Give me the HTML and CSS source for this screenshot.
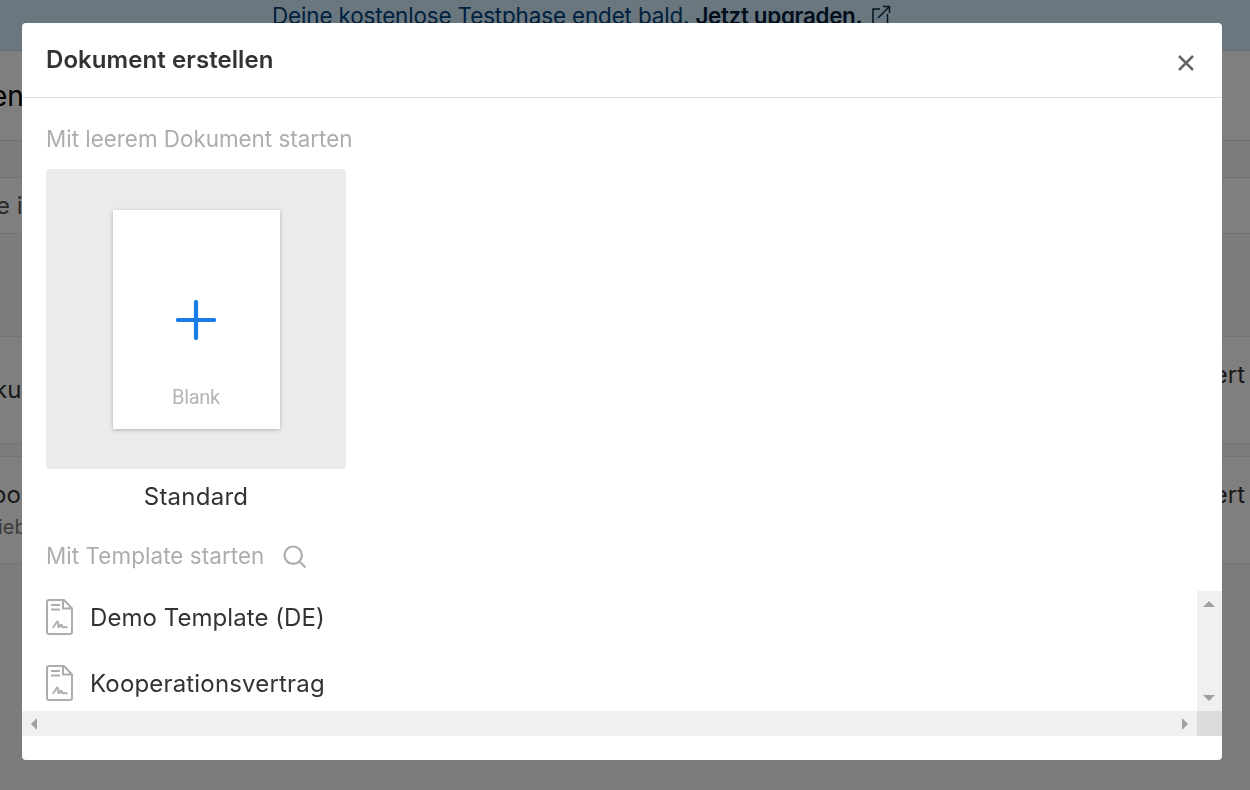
FILE: index.html
```html
<!DOCTYPE html>
<html lang="de">
<head>
    <meta charset="UTF-8">
    <meta name="viewport" content="width=device-width, initial-scale=1.0">
    <title>Dokument erstellen</title>
    <link rel="stylesheet" href="styles.css">
</head>
<body>
    <div class="page">
        <div class="banner">
            <span class="trial">Deine kostenlose Testphase endet bald.</span>
            <b class="upgrade">Jetzt upgraden.</b>
            <svg class="external" width="20" height="20" viewBox="0 0 20 20">
                <path d="M9 4H2V19H16.500V9M7 13L18 2M12 1.500H18.500V8"/>
            </svg>
        </div>
        <div class="topbar"><span>en</span></div>
        <div class="search-row"><span>e i</span></div>
        <div class="doc">
            <div class="doc-name">ku</div>
            <div class="doc-state">ert</div>
        </div>
        <div class="doc">
            <div class="doc-name">oo<small>ieb</small></div>
            <div class="doc-state">ert</div>
        </div>
    </div>
    <div class="overlay">
        <div class="modal">
            <div class="modal-head">
                <h1>Dokument erstellen</h1>
                <svg class="close" width="18" height="18" viewBox="0 0 18 18">
                    <path d="M2 2L16 16M16 2L2 16"/>
                </svg>
            </div>
            <div class="blank">
                <h2>Mit leerem Dokument starten</h2>
                <div class="thumb">
                    <div class="sheet">
                        <svg class="plus" width="40" height="40" viewBox="0 0 40 40">
                            <path d="M20 2V38M2 20H38"/>
                        </svg>
                        <span>Blank</span>
                    </div>
                </div>
                <p>Standard</p>
            </div>
            <h2 class="template-title">
                <span>Mit Template starten</span>
                <svg class="magnifier" width="24" height="24" viewBox="0 0 24 24">
                    <circle cx="10.200" cy="10.200" r="8.700"/>
                    <path d="M16.500 16.500L22.500 22.500"/>
                </svg>
            </h2>
            <div class="scroller">
                <ul class="templates">
                    <li>
                        <svg class="file" width="28" height="36" viewBox="0 0 28 36">
                            <path d="M18 1H3Q1 1 1 3V33Q1 35 3 35H24Q26 35 26 33V9.500L18 1H17V9.500H26M5 6H14M5 10.500H14"/>
                            <path d="M6.500 28.500C9 28 10 22 11.500 22.500C13 23.500 11.500 28.500 13 28C14.500 27 14 25 15.500 26S15 28 17 28.200S18.500 27.500 21.500 28.500"/>
                        </svg>
                        <span>Demo Template (DE)</span>
                    </li>
                    <li>
                        <svg class="file" width="28" height="36" viewBox="0 0 28 36">
                            <path d="M18 1H3Q1 1 1 3V33Q1 35 3 35H24Q26 35 26 33V9.500L18 1H17V9.500H26M5 6H14M5 10.500H14"/>
                            <path d="M6.500 28.500C9 28 10 22 11.500 22.500C13 23.500 11.500 28.500 13 28C14.500 27 14 25 15.500 26S15 28 17 28.200S18.500 27.500 21.500 28.500"/>
                        </svg>
                        <span class="contract">Kooperationsvertrag</span>
                    </li>
                </ul>
                <div class="bar-y"><i class="up"></i><i class="down"></i></div>
                <div class="bar-x"><i class="left"></i><i class="right"></i></div>
                <div class="corner"></div>
            </div>
        </div>
    </div>
</body>
</html>
```
FILE: styles.css
```css
* {
	margin: 0;
	padding: 0;
	box-sizing: border-box;
}
body {
	height: 790px;
	overflow: hidden;
	background: #f9f9fc;
	color: #333;
	font-family: Inter, "Liberation Sans", sans-serif;
	font-size: 24px;
}
svg {
	fill: none;
	flex: none;
}
span, b {
	white-space: nowrap;
}
.page {
	height: 790px;
}
.banner {
	height: 51px;
	padding: 1px 0 0 272px;
	display: flex;
	background: #d6eeff;
	border-bottom: 1px solid #c4dceb;
	color: #00427a;
	font-size: 22.4px;
	line-height: 29px;
	letter-spacing: -0.12px;
}
.upgrade {
	margin-left: 6px;
	color: #001d3d;
	font-weight: 600;
	letter-spacing: -0.32px;
}
.external {
	margin: 4px 0 0 9px;
	stroke: #00294d;
	stroke-width: 1.5;
}
.topbar {
	height: 90px;
	padding-top: 27px;
	background: #fff;
	border-bottom: 1px solid #e4e4e6;
	color: #000;
	font-size: 28px;
	line-height: 36px;
}
.topbar span {
	margin-left: -9px;
}
.search-row {
	height: 57px;
	margin: 36px 0 102px;
	padding-top: 13px;
	background: #fff;
	border-top: 1px solid #e4e4e6;
	border-bottom: 1px solid #e4e4e6;
	color: #555;
	line-height: 30px;
}
.search-row span {
	margin-left: -4px;
}
.doc {
	height: 108px;
	margin-bottom: 12px;
	padding: 23px 5px 0 0;
	display: flex;
	justify-content: space-between;
	background: #fff;
	border-top: 1px solid #e4e4e6;
	border-bottom: 1px solid #e4e4e6;
	line-height: 30px;
}
.doc-name {
	padding-top: 15px;
	margin-left: -6px;
}
.doc + .doc .doc-name {
	padding-top: 0;
	margin-left: -8px;
}
.doc small {
	display: block;
	margin-left: 6px;
	color: #777;
	font-size: 20px;
	line-height: 34px;
}
.overlay {
	position: fixed;
	inset: 0;
	padding: 23px 28px 30px 22px;
	background: rgba(0, 0, 0, 0.5);
}
.modal {
	height: 737px;
	background: #fff;
	border-radius: 4px;
	overflow: hidden;
}
.modal-head {
	height: 75px;
	padding: 0 27px 0 24px;
	display: flex;
	justify-content: space-between;
	align-items: center;
	border-bottom: 1px solid #e0e0e0;
}
h1 {
	font-size: 24px;
	font-weight: 600;
	line-height: 30px;
	letter-spacing: 0.08px;
}
.close {
	margin-top: 5px;
	stroke: #666;
	stroke-width: 2.5;
}
h2 {
	color: #adadad;
	font-size: 22.4px;
	font-weight: 400;
	line-height: 28px;
	white-space: nowrap;
}
.blank {
	width: 324px;
	padding: 27px 0 0 24px;
}
.thumb {
	height: 300px;
	margin-top: 16px;
	padding-top: 1px;
	display: flex;
	justify-content: center;
	align-items: center;
	background: #ebebeb;
	border-radius: 4px;
}
.sheet {
	width: 167px;
	height: 219px;
	padding-top: 90px;
	display: flex;
	flex-direction: column;
	align-items: center;
	background: #fff;
	box-shadow: 0 1px 4px rgba(0, 0, 0, 0.25);
	color: #b5b5b5;
	font: 20px/24px Roboto, sans-serif;
	letter-spacing: -0.3px;
}
.sheet span {
	margin-top: 45px;
}
.plus {
	stroke: #1b7ce5;
	stroke-width: 4.2;
	stroke-linecap: round;
}
.blank p {
	margin-top: 13px;
	text-align: center;
	line-height: 30px;
	letter-spacing: 0.25px;
}
.template-title {
	height: 28px;
	margin: 30px 0 21px 24px;
	display: flex;
	align-items: center;
	letter-spacing: 0.08px;
}
.magnifier {
	margin: 2px 0 0 19px;
	stroke: #adadad;
	stroke-width: 2.200;
}
.scroller {
	height: 145px;
	display: grid;
	grid-template-columns: 1fr 25px;
	grid-template-rows: 120px 25px;
}
.templates {
	padding: 8px 0 0 24px;
	list-style: none;
}
.templates li {
	height: 36px;
	margin-bottom: 30px;
	display: flex;
	align-items: center;
	gap: 16px;
	letter-spacing: 0.06px;
}
.templates .contract {
	letter-spacing: 0.17px;
}
.file {
	stroke: #adadad;
	stroke-width: 2;
}
.bar-x, .bar-y {
	display: flex;
	justify-content: space-between;
	align-items: center;
	background: #f0f0f0;
}
.bar-x {
	padding: 0 9px;
}
.bar-y {
	flex-direction: column;
	padding: 10px 1px 10px 0;
}
.corner {
	background: #dcdcdc;
}
.scroller i {
	border: 6px solid transparent;
}
.scroller .up {
	border-top: 0;
	border-bottom-color: #a0a0a0;
}
.scroller .down {
	border-bottom: 0;
	border-top-color: #a0a0a0;
}
.scroller .left {
	border-left: 0;
	border-right-color: #a0a0a0;
}
.scroller .right {
	border-right: 0;
	border-left-color: #a0a0a0;
}
```
